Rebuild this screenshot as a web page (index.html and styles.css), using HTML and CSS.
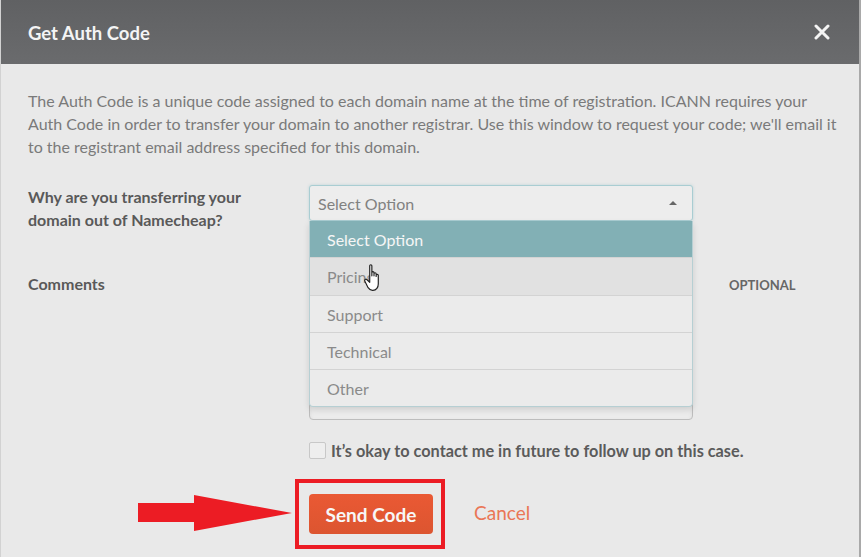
FILE: index.html
```html
<!DOCTYPE html>
<html lang="en">
<head>
    <meta charset="UTF-8">
    <title>Get Auth Code</title>
    <link rel="stylesheet" href="styles.css">
</head>
<body>
    <div class="modal">
        <div class="modal-head">
            <h1 class="modal-title">Get Auth Code</h1>
            <svg class="modal-close" width="16" height="16" viewBox="0 0 16 16">
                <path d="M2 2L14 14M14 2L2 14" stroke="#f4f4f4" stroke-width="3" stroke-linecap="round"/>
            </svg>
        </div>
        <div class="modal-body">
            <p class="intro">The Auth Code is a unique code assigned to each domain name at the time of registration. ICANN requires your Auth Code in order to transfer your domain to another registrar. Use this window to request your code; we'll email it to the registrant email address specified for this domain.</p>

            <div class="form-row reason-row">
                <label class="form-label">Why are you transferring your domain out of Namecheap?</label>
                <div class="field">
                    <div class="select">
                        <span>Select Option</span>
                        <span class="select-arrow"></span>
                    </div>
                    <ul class="dropdown">
                        <li class="active">Select Option</li>
                        <li class="hover">Pricing
                            <svg class="cursor" width="22" height="30" viewBox="0 0 20 28">
                                <path d="M6 2.5c0-1.2 2-1.2 2 0v9.5V9c0-1.2 2-1.2 2 0v3V10c0-1.2 2-1.2 2 0v2.5V11.5c0-1.2 2-1.2 2 0v8c0 3-1.8 6-5 6H8.5c-2 0-3-1-4-2.5L1.5 17c-.8-1.3.8-2.6 2-1.4L6 18z" fill="#fff" stroke="#222" stroke-width="1.1" stroke-linejoin="round"/>
                            </svg>
                        </li>
                        <li>Support</li>
                        <li>Technical</li>
                        <li>Other</li>
                    </ul>
                </div>
            </div>

            <div class="form-row comments-row">
                <label class="form-label">Comments</label>
                <div class="field">
                    <div class="textarea"></div>
                </div>
                <span class="optional">OPTIONAL</span>
            </div>

            <div class="form-row check-row">
                <span></span>
                <label class="check"><span class="box"></span>It’s okay to contact me in future to follow up on this case.</label>
            </div>

            <div class="form-row actions">
                <span></span>
                <div class="action-group">
                    <svg class="arrow" width="156" height="40" viewBox="0 0 156 40">
                        <polygon points="0,9 56,9 56,1 154,19 56,37 56,28 0,28" fill="#ec1c24"/>
                    </svg>
                    <div class="highlight">
                        <button class="btn-send">Send Code</button>
                    </div>
                    <a class="cancel" href="#">Cancel</a>
                </div>
            </div>
        </div>
    </div>
</body>
</html>
```
FILE: styles.css
```css
*{
    margin: 0;
    padding: 0;
    box-sizing: border-box;
}
body{
    background: #e9e9e9;
    font-family: Lato, "Open Sans", sans-serif;
    overflow: hidden;
}
.modal{
    width: 861px;
    height: 557px;
    border-left: 1px solid #d2d2d2;
    border-right: 2px solid #a9a9a9;
    background: #e9e9e9;
}
.modal-head{
    height: 64px;
    background: linear-gradient(#606163, #6a6b6d);
    display: flex;
    align-items: center;
    justify-content: space-between;
    padding: 0 29px 0 27px;
}
.modal-title{
    color: #f4f4f4;
    font-size: 18.5px;
    font-weight: 700;
    padding-top: 2px;
}
.modal-close{
    margin-top: -1px;
}
.modal-body{
    padding: 25px 0 0 27px;
}
.intro{
    color: #7a7a7a;
    font-size: 16px;
    line-height: 23px;
    width: 812px;
}
.form-row{
    display: grid;
    grid-template-columns: 281px 384px auto;
    align-items: start;
}
.reason-row{
    margin-top: 27px;
}
.form-label{
    color: #595959;
    font-size: 16px;
    font-weight: 700;
    line-height: 23px;
    width: 240px;
}
.field{
    position: relative;
}
.select{
    height: 36px;
    background: #ededed;
    border: 1px solid #a9cdd2;
    border-radius: 3px;
    display: flex;
    align-items: center;
    justify-content: space-between;
    padding: 0 15px 0 8px;
    color: #818181;
    font-size: 16px;
    box-shadow: 0 0 3px rgba(120,180,190,.4);
}
.select-arrow{
    width: 0;
    height: 0;
    border-left: 4px solid transparent;
    border-right: 4px solid transparent;
    border-bottom: 4px solid #666;
}
.dropdown{
    position: absolute;
    top: 36px;
    left: 0;
    width: 384px;
    list-style: none;
    background: #ebebeb;
    border: 1px solid #b6cfd3;
    border-top: none;
    border-radius: 0 0 4px 4px;
    box-shadow: 0 3px 6px rgba(0,0,0,.12);
    z-index: 2;
}
.dropdown li{
    position: relative;
    height: 37px;
    line-height: 37px;
    padding-left: 17px;
    color: #8a8a8a;
    font-size: 16px;
    border-top: 1px solid #d3d3d3;
}
.dropdown li.active{
    height: 36px;
    background: #82b0b5;
    color: #f6f6f6;
    border-top: none;
}
.dropdown li.hover{
    height: 38px;
    line-height: 38px;
    background: #e1e1e1;
}
.cursor{
    position: absolute;
    left: 53px;
    top: 5px;
}
.comments-row{
    margin-top: 40px;
}
.comments-row .form-label{
    padding-top: 1px;
}
.textarea{
    height: 149px;
    background: #ececec;
    border: 1px solid #bdbdbd;
    border-radius: 4px;
    box-shadow: inset 0 2px 4px rgba(0,0,0,.08);
}
.optional{
    margin: 3px 0 0 36px;
    color: #666;
    font-size: 13px;
    font-weight: 700;
    line-height: 23px;
}
.check-row{
    margin-top: 21px;
}
.check{
    grid-column: 2 / 4;
    display: flex;
    align-items: center;
    color: #5b5b5b;
    font-size: 16.3px;
    font-weight: 700;
    white-space: nowrap;
}
.box{
    width: 17px;
    height: 17px;
    margin-right: 5px;
    background: #eeeeee;
    border: 1px solid #c8c8c8;
    border-radius: 2px;
}
.actions{
    margin-top: 19px;
}
.action-group{
    position: relative;
    grid-column: 2 / 4;
    display: flex;
    align-items: center;
    margin-left: -14px;
}
.arrow{
    position: absolute;
    left: -157px;
    top: 15px;
}
.highlight{
    border: 4px solid #ec1c24;
    padding: 11px 8px 11px 10px;
}
.btn-send{
    width: 124px;
    height: 40px;
    border: none;
    border-radius: 4px;
    background: linear-gradient(#ea5934, #dc5530);
    color: #f7f7f7;
    font-family: Lato, "Open Sans", sans-serif;
    font-size: 19px;
    font-weight: 700;
}
.cancel{
    margin: -3px 0 0 29px;
    color: #ea7656;
    font-size: 19px;
    text-decoration: none;
}
```
